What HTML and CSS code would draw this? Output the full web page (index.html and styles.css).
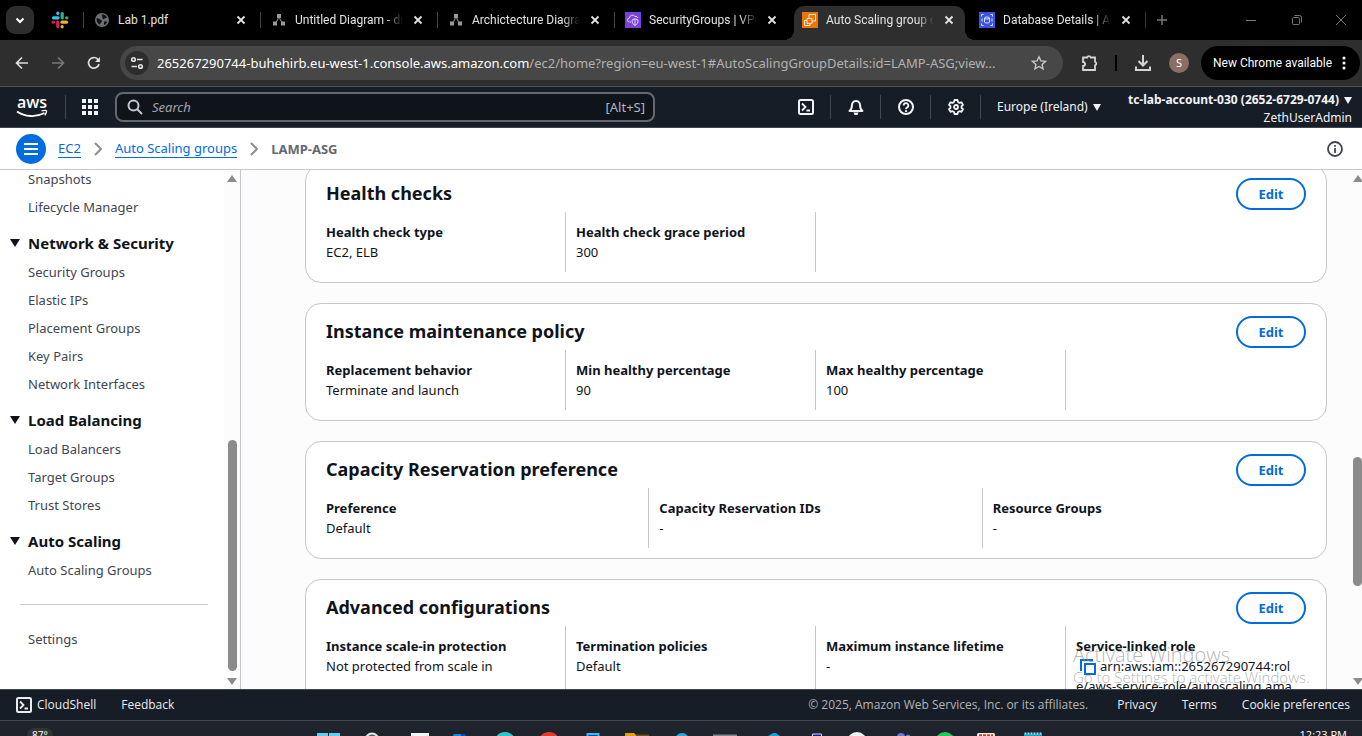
FILE: index.html
```html
<!DOCTYPE html>
<html lang="en">
<head>
<meta charset="utf-8">
<title>Auto Scaling group details</title>
<meta name="viewport" content="width=device-width, initial-scale=1">
<link rel="stylesheet" href="styles.css">
</head>
<body>
<svg class="defs" aria-hidden="true">
  <symbol id="i-close" viewBox="0 0 16 16"><path d="M4.5 4.5l7 7M11.5 4.5l-7 7" stroke="currentColor" stroke-width="1.8" fill="none"/></symbol>
  <symbol id="i-drawio" viewBox="0 0 16 16"><path d="M8 5L4.500 11.500M8 5l3.500 6.500" stroke="#777" stroke-width="1.200"/><rect x="6" y="2" width="4" height="4" fill="#999"/><rect x="2" y="9.500" width="4" height="4" fill="#999"/><rect x="10" y="9.500" width="4" height="4" fill="#999"/></symbol>
  <symbol id="i-shell" viewBox="0 0 16 16"><rect x="1" y="1" width="14" height="14" rx="1.500" fill="none" stroke="currentColor" stroke-width="2"/><path d="M4 4.500L7.500 8 4 11.500M8.500 11.500H12" fill="none" stroke="currentColor" stroke-width="1.800"/></symbol>
  <symbol id="i-chev" viewBox="0 0 16 16"><path d="M5 2l6 6-6 6" fill="none" stroke="#8c8c94" stroke-width="2"/></symbol>
</svg>

<header class="tabstrip">
  <button class="tab-search" aria-label="Search tabs"><svg width="12" height="12" viewBox="0 0 12 12"><path d="M2.500 4.500L6 8l3.500-3.500" fill="none" stroke="#fff" stroke-width="2"/></svg></button>
  <button class="pinned" aria-label="Slack">
    <svg width="18" height="18" viewBox="0 0 18 18" fill="none" stroke-width="3.200" stroke-linecap="round"><path d="M2.500 6.800H7" stroke="#36c5f0"/><path d="M6.800 2.200v.1" stroke="#36c5f0"/><path d="M11.200 2.500V7" stroke="#2eb67d"/><path d="M15.700 6.800h.1" stroke="#2eb67d"/><path d="M11 11.200h4.500" stroke="#ecb22e"/><path d="M11.200 15.700v.1" stroke="#ecb22e"/><path d="M6.800 11v4.500" stroke="#e01e5a"/><path d="M2.200 11.200h.1" stroke="#e01e5a"/></svg>
  </button>
  <div class="tabs">
    <div class="tab"><svg class="fav" viewBox="0 0 16 16"><circle cx="8" cy="8" r="7" fill="#6b6f75"/><path d="M2.500 6.500c2-1 3 1 4.500 1.500s1 2 0 2.500-.5 2-1.500 2C3.500 11.500 2.500 9 2.500 6.500zM8 2.500c2-.5 4.500 1 5 3-1 1-2.500.5-3 1.500s-2-.5-1.500-1.500S7 4 8 2.500zM10.500 9.500c1-.5 2 0 2.500.5-.5 1.500-1.500 2.500-2.500 3-.5-1-1-2.500 0-3.500z" fill="#111"/></svg><a href="#" class="tab-title">Lab 1.pdf</a><button class="tab-close" aria-label="Close"><svg><use href="#i-close"/></svg></button></div>
    <div class="tab"><svg class="fav"><use href="#i-drawio"/></svg><a href="#" class="tab-title fade">Untitled Diagram - draw.io</a><button class="tab-close" aria-label="Close"><svg><use href="#i-close"/></svg></button></div>
    <div class="tab"><svg class="fav"><use href="#i-drawio"/></svg><a href="#" class="tab-title fade">Archictecture Diagram</a><button class="tab-close" aria-label="Close"><svg><use href="#i-close"/></svg></button></div>
    <div class="tab"><svg class="fav" viewBox="0 0 16 16"><rect width="16" height="16" fill="#7a3fe0"/><path d="M6 10H4.500a2 2 0 010-4 3 3 0 015.500-1.500A2.500 2.500 0 0113 6" fill="none" stroke="#e7d8ff"/><path d="M7 8l3-1.300L13 8c0 3-1 4.500-3 5.500C8 12.500 7 11 7 8zM10 7v6" fill="none" stroke="#e7d8ff"/></svg><a href="#" class="tab-title fade">SecurityGroups | VPC Console</a><button class="tab-close" aria-label="Close"><svg><use href="#i-close"/></svg></button></div>
    <div class="tab active"><svg class="fav" viewBox="0 0 16 16"><rect width="16" height="16" fill="#e8760a"/><path d="M7 6V2.500h6.500V9H10" fill="none" stroke="#ffe9d2"/><path d="M5 6.500h5v5H5z" fill="none" stroke="#ffe9d2"/><path d="M5 8.500H2.500v5H8v-2" fill="none" stroke="#ffe9d2"/></svg><a href="#" class="tab-title fade">Auto Scaling group details</a><button class="tab-close" aria-label="Close"><svg><use href="#i-close"/></svg></button></div>
    <div class="tab"><svg class="fav" viewBox="0 0 16 16"><rect width="16" height="16" fill="#3b55e6"/><path d="M2.500 4.500v-2h2M11.500 2.500h2v2M13.500 11.500v2h-2M4.500 13.500h-2v-2" fill="none" stroke="#dbe2ff"/><ellipse cx="8" cy="6" rx="2.500" ry="1" fill="none" stroke="#dbe2ff"/><path d="M5.500 6v4c0 1.400 5 1.400 5 0V6M3 6.500v3M13 6.500v3" fill="none" stroke="#dbe2ff"/></svg><a href="#" class="tab-title fade">Database Details | Aurora</a><button class="tab-close" aria-label="Close"><svg><use href="#i-close"/></svg></button></div>
  </div>
  <button class="new-tab" aria-label="New tab"><svg width="12" height="12" viewBox="0 0 12 12"><path d="M6 1v10M1 6h10" stroke="#777" stroke-width="1.500"/></svg></button>
  <div class="win-controls">
    <button aria-label="Minimize"><svg width="12" height="12" viewBox="0 0 12 12"><path d="M1 6.500h10" stroke="#777"/></svg></button>
    <button aria-label="Restore"><svg width="12" height="12" viewBox="0 0 12 12" fill="none" stroke="#777"><rect x="1.500" y="3.500" width="7" height="7" rx="1"/><path d="M3.500 1.500h5a2 2 0 012 2v5"/></svg></button>
    <button aria-label="Close window"><svg width="12" height="12" viewBox="0 0 12 12"><path d="M1 1l10 10M11 1L1 11" stroke="#777"/></svg></button>
  </div>
</header>

<div class="toolbar">
  <button class="tool" aria-label="Back"><svg width="16" height="16" viewBox="0 0 16 16"><path d="M14 8H3M8 2.500L2.500 8 8 13.500" fill="none" stroke="#ddd" stroke-width="1.700"/></svg></button>
  <button class="tool" aria-label="Forward"><svg width="16" height="16" viewBox="0 0 16 16"><path d="M2 8h11M8 2.500L13.500 8 8 13.500" fill="none" stroke="#777" stroke-width="1.700"/></svg></button>
  <button class="tool" aria-label="Reload"><svg width="16" height="16" viewBox="0 0 16 16"><path d="M13 9a5.300 5.300 0 11-1.300-4.800L13.500 6" fill="none" stroke="#ddd" stroke-width="1.700"/><path d="M14 2v5H9z" fill="#ddd"/></svg></button>
  <div class="omnibox">
    <button class="site-info" aria-label="Site information"><svg width="16" height="16" viewBox="0 0 16 16" fill="none" stroke="#e3e3e3" stroke-width="1.600"><circle cx="4.500" cy="4.500" r="1.800"/><path d="M8 4.500h5.500M2.500 11.500H8"/><circle cx="11.500" cy="11.500" r="1.800"/></svg></button>
    <div class="url"><b>265267290744-buhehirb.eu-west-1.console.aws.amazon.com</b>/ec2/home?region=eu-west-1#AutoScalingGroupDetails:id=LAMP-ASG;view...</div>
    <button class="star" aria-label="Bookmark"><svg width="16" height="16" viewBox="0 0 16 16"><path d="M8 1.800l1.900 4.100 4.500.5-3.300 3 .9 4.400L8 11.500l-4 2.300.9-4.400-3.300-3 4.500-.5z" fill="none" stroke="#c7c7c7" stroke-width="1.400"/></svg></button>
  </div>
  <button class="ext" aria-label="Extensions"><svg width="18" height="18" viewBox="0 0 18 18"><path d="M2 3.500h4.200a1.900 1.900 0 013.600 0H14v4.300a1.900 1.900 0 010 3.600V16H2v-4c2.800 0 2.800-4 0-4z" fill="none" stroke="#d5d5d5" stroke-width="1.800"/></svg></button>
  <span class="tool-sep"></span>
  <button class="download" aria-label="Downloads"><svg width="18" height="18" viewBox="0 0 18 18"><path d="M9 1v10M4.500 7L9 11.500 13.500 7M2 12.500V16h14v-3.500" fill="none" stroke="#d5d5d5" stroke-width="2"/></svg></button>
  <button class="avatar">S</button>
  <button class="update">New Chrome available <svg width="4" height="16" viewBox="0 0 4 16" fill="#fff"><circle cx="2" cy="3" r="1.500"/><circle cx="2" cy="8" r="1.500"/><circle cx="2" cy="13" r="1.500"/></svg></button>
</div>

<nav class="aws-bar">
  <a href="#" class="logo" aria-label="AWS home"><svg width="34" height="26" viewBox="0 0 34 26"><text x="2" y="14" class="logo-text">aws</text><path d="M2 17.500c8 5.500 19 6 27.500 1.500" fill="none" stroke="#fff" stroke-width="1.800"/><path d="M26.500 16.800c3-.8 5.500-.6 5 .5-.2 1.500-.8 3-1.800 4" fill="none" stroke="#fff" stroke-width="1.300"/></svg></a>
  <button class="grid-btn" aria-label="Services"><svg width="16" height="16" viewBox="0 0 16 16" fill="#f3f3f7"><path d="M0 0h4v4H0zM6 0h4v4H6zM12 0h4v4h-4zM0 6h4v4H0zM6 6h4v4H6zM12 6h4v4h-4zM0 12h4v4H0zM6 12h4v4H6zM12 12h4v4h-4z"/></svg></button>
  <label class="search">
    <svg width="16" height="16" viewBox="0 0 16 16"><circle cx="6.500" cy="6.500" r="5" fill="none" stroke="#c6c6cd" stroke-width="2"/><path d="M10 10l5 5" stroke="#c6c6cd" stroke-width="2"/></svg>
    <input type="text" placeholder="Search" aria-label="Search">
    <span>[Alt+S]</span>
  </label>
  <div class="aws-icons">
    <button aria-label="CloudShell"><svg width="16" height="16"><use href="#i-shell"/></svg></button>
    <button aria-label="Notifications"><svg width="16" height="16" viewBox="0 0 16 16"><path d="M1.500 12c2-1.500 2.500-3.500 2.500-6a4 4 0 018 0c0 2.500.5 4.500 2.500 6z" fill="none" stroke="#f3f3f7" stroke-width="2" stroke-linejoin="round"/><path d="M5.500 13.500h5L9.500 16h-3z" fill="#f3f3f7"/></svg></button>
    <button aria-label="Help"><svg width="16" height="16" viewBox="0 0 16 16"><circle cx="8" cy="8" r="7" fill="none" stroke="#f3f3f7" stroke-width="2"/><path d="M5.700 6.500a2.300 2.300 0 113.400 2C8.300 9 8 9.300 8 10.200" fill="none" stroke="#f3f3f7" stroke-width="1.800"/><path d="M7 11.200h2v1.800H7z" fill="#f3f3f7"/></svg></button>
    <button aria-label="Settings"><svg width="16" height="16" viewBox="0 0 16 16" fill="none" stroke="#f3f3f7" stroke-width="1.800" stroke-linejoin="round"><path d="M6.500 1h3l.5 2 1.500.9 2-.6 1.500 2.600L13.500 7.200v1.600L15 10.200l-1.500 2.600-2-.6L10 13l-.5 2h-3L6 13l-1.500-.8-2 .6L1 10.200l1.500-1.400V7.200L1 5.900l1.500-2.600 2 .6L6 3z"/><circle cx="8" cy="8" r="2"/></svg></button>
  </div>
  <button class="region">Europe (Ireland)<i class="caret"></i></button>
  <button class="account"><b>tc-lab-account-030 (2652-6729-0744)<i class="caret"></i></b><span>ZethUserAdmin</span></button>
</nav>

<div class="crumbs">
  <button class="menu" aria-label="Menu"><svg width="14" height="14" viewBox="0 0 14 14"><path d="M0 2h14M0 7h14M0 12h14" stroke="#fff" stroke-width="2"/></svg></button>
  <a href="#">EC2</a><svg width="16" height="16"><use href="#i-chev"/></svg>
  <a href="#">Auto Scaling groups</a><svg width="16" height="16"><use href="#i-chev"/></svg>
  <span>LAMP-ASG</span>
  <button class="info" aria-label="Info"><svg width="16" height="16" viewBox="0 0 16 16"><circle cx="8" cy="8" r="7" fill="none" stroke="#424650" stroke-width="1.800"/><path d="M8 7v5M8 4v1.800" stroke="#424650" stroke-width="1.800"/></svg></button>
</div>

<div class="body">
  <aside class="side">
    <nav class="side-nav">
      <a href="#">Snapshots</a>
      <a href="#">Lifecycle Manager</a>
      <h3><i class="caret"></i>Network &amp; Security</h3>
      <a href="#">Security Groups</a>
      <a href="#">Elastic IPs</a>
      <a href="#">Placement Groups</a>
      <a href="#">Key Pairs</a>
      <a href="#">Network Interfaces</a>
      <h3><i class="caret"></i>Load Balancing</h3>
      <a href="#">Load Balancers</a>
      <a href="#">Target Groups</a>
      <a href="#">Trust Stores</a>
      <h3><i class="caret"></i>Auto Scaling</h3>
      <a href="#">Auto Scaling Groups</a>
      <hr>
      <a href="#">Settings</a>
    </nav>
    <div class="scrollbar"><i class="up"></i><div class="track"><div class="thumb side-thumb"></div></div><i class="down"></i></div>
  </aside>

  <main class="content">
    <div class="cards">
      <section class="card">
        <header><h2>Health checks</h2><button class="edit">Edit</button></header>
        <dl class="cols">
          <div><dt>Health check type</dt><dd>EC2, ELB</dd></div>
          <div><dt>Health check grace period</dt><dd>300</dd></div>
        </dl>
      </section>
      <section class="card">
        <header><h2>Instance maintenance policy</h2><button class="edit">Edit</button></header>
        <dl class="cols">
          <div><dt>Replacement behavior</dt><dd>Terminate and launch</dd></div>
          <div><dt>Min healthy percentage</dt><dd>90</dd></div>
          <div><dt>Max healthy percentage</dt><dd>100</dd></div>
        </dl>
      </section>
      <section class="card">
        <header><h2>Capacity Reservation preference</h2><button class="edit">Edit</button></header>
        <dl class="cols three">
          <div><dt>Preference</dt><dd>Default</dd></div>
          <div><dt>Capacity Reservation IDs</dt><dd>-</dd></div>
          <div><dt>Resource Groups</dt><dd>-</dd></div>
        </dl>
      </section>
      <section class="card">
        <header><h2>Advanced configurations</h2><button class="edit">Edit</button></header>
        <dl class="cols">
          <div><dt>Instance scale-in protection</dt><dd>Not protected from scale in</dd></div>
          <div><dt>Termination policies</dt><dd>Default</dd></div>
          <div><dt>Maximum instance lifetime</dt><dd>-</dd></div>
          <div><dt>Service-linked role</dt><dd class="arn"><button aria-label="Copy"><svg width="16" height="16" viewBox="0 0 16 16" fill="none" stroke="#006ce0" stroke-width="2"><path d="M1 12V1h12"/><rect x="5" y="5" width="10" height="10"/></svg></button>arn:aws:iam::265267290744:rol<br>e/aws-service-role/autoscaling.ama</dd></div>
        </dl>
      </section>
    </div>
    <div class="scrollbar page-bar"><i class="up"></i><div class="track"><div class="thumb page-thumb"></div></div><i class="down"></i></div>
    <div class="watermark"><p>Activate Windows</p><small>Go to Settings to activate Windows.</small></div>
  </main>
</div>

<footer class="aws-footer">
  <a href="#" class="shell"><svg width="16" height="16"><use href="#i-shell"/></svg>CloudShell</a>
  <a href="#">Feedback</a>
  <span class="copy">© 2025, Amazon Web Services, Inc. or its affiliates.</span>
  <a href="#">Privacy</a>
  <a href="#">Terms</a>
  <a href="#">Cookie preferences</a>
</footer>

<div class="taskbar">
  <div class="weather"><span>87°</span></div>
  <div class="apps">
    <svg viewBox="0 0 44 15"><path d="M11 12h11v3H11zM23 12h11v3H23z" fill="#5ccff5"/></svg>
    <svg viewBox="0 0 44 15"><circle cx="22" cy="19" r="6.500" fill="#555" stroke="#e6e6e6" stroke-width="2"/></svg>
    <svg viewBox="0 0 44 15"><path d="M17 12h18v3H17z" fill="#f5f5f5"/></svg>
    <svg viewBox="0 0 44 15"><path d="M15 15c0-2 1-2 3-2h9v2z" fill="#1489df"/><path d="M23 13h3l3 2h-6z" fill="#0b46b5"/></svg>
    <svg viewBox="0 0 44 15"><circle cx="23" cy="22" r="11" fill="#31c4cf"/></svg>
    <svg viewBox="0 0 44 15"><circle cx="23" cy="22" r="11" fill="#e23d31"/></svg>
    <svg viewBox="0 0 44 15"><path d="M17.500 16v-3h11v3" fill="#123e80" stroke="#35baf5" stroke-width="2"/></svg>
    <svg viewBox="0 0 44 15"><path d="M11 15v-3h9l2 2v1z" fill="#dfa008"/><path d="M22 13.500h13V15H22z" fill="#6e5410"/></svg>
    <svg viewBox="0 0 44 15"><circle cx="24" cy="19" r="7" fill="#2ba4df"/></svg>
    <svg viewBox="0 0 44 15"><path d="M11 13.500h24V15H11z" fill="#84878c"/></svg>
    <svg viewBox="0 0 44 15"><path d="M22 15l5-3h3l4 3z" fill="#179de0"/></svg>
    <svg viewBox="0 0 44 15"><path d="M22.500 16v-3h9v3" fill="#1818a8" stroke="#ddd"/></svg>
    <svg viewBox="0 0 44 15"><circle cx="23" cy="21" r="10" fill="#f1f1f1"/></svg>
    <svg viewBox="0 0 44 15"><circle cx="23" cy="16" r="4" fill="#6f76d9"/><circle cx="30" cy="16" r="2.500" fill="#6f76d9"/></svg>
    <svg viewBox="0 0 44 15"><circle cx="23" cy="21" r="10" fill="#23c75d"/></svg>
    <svg viewBox="0 0 44 15"><rect x="11" y="12" width="18" height="6" rx="1.500" fill="#f4efec"/><path d="M13 14.500h14" stroke="#d43b15" stroke-width="2.500" stroke-dasharray="3 1"/></svg>
    <svg viewBox="0 0 44 15"><path d="M14 13h18v2H14z" fill="#1f9bbd"/><path d="M14.500 12.500h17" stroke="#8ce5fa" stroke-width="2" stroke-dasharray="2 1"/></svg>
  </div>
  <div class="clock">12:23 PM</div>
</div>
</body>
</html>
```

FILE: styles.css
```css
* { box-sizing: border-box; }
html, body { height: 100%; }
body {
  margin: 0;
  display: flex;
  flex-direction: column;
  overflow: hidden;
  font: 13px/20px "Noto Sans", "Open Sans", sans-serif;
  color: #0f141a;
  background: #fff;
}
button { font: inherit; color: inherit; background: none; border: 0; padding: 0; display: flex; align-items: center; justify-content: center; flex: none; }
a { color: inherit; text-decoration: none; }
h2, h3, dl, dd, p { margin: 0; }
svg { display: block; flex: none; }
.defs { position: absolute; width: 0; height: 0; }
.caret { display: inline-block; border: 4px solid transparent; border-top: 7px solid currentColor; border-bottom: 0; }

/* Browser tabs */
.tabstrip { flex: none; height: 40px; display: flex; align-items: center; background: #000; color: #e3e3e3; font: 12px/16px Roboto, "Open Sans", sans-serif; }
.tab-search { width: 28px; height: 28px; margin-left: 6px; border-radius: 9px; background: #2d2d2d; }
.pinned { width: 49px; height: 28px; padding-left: 3px; }
.tabs { display: flex; flex: 0 1 1062px; min-width: 0; align-self: stretch; }
.tab { flex: 1 1 0; min-width: 0; display: flex; align-items: center; padding: 0 11px; position: relative; }
.tab::before { content: ""; position: absolute; left: 0; top: 12px; height: 16px; border-left: 1px solid #444; }
.fav { width: 16px; height: 16px; margin-right: 8px; position: relative; }
.tab-title { flex: 1; min-width: 0; overflow: hidden; white-space: nowrap; position: relative; }
.tab-title.fade { mask-image: linear-gradient(to right, #000 84%, transparent); }
.tab-close { width: 16px; height: 16px; margin-left: 7px; color: #e3e3e3; position: relative; }
.tab-close svg { width: 16px; height: 16px; }
.tab.active::before { left: 3px; right: 3px; top: 6px; bottom: 0; height: auto; border: 0; border-radius: 10px 10px 0 0; background: #2e2e2e; }
.tab.active::after { content: ""; position: absolute; left: -7px; right: -7px; bottom: 0; height: 10px; background: radial-gradient(circle at 0 0, transparent 10px, #2e2e2e 10px) left / 10px 10px no-repeat, radial-gradient(circle at 100% 0, transparent 10px, #2e2e2e 10px) right / 10px 10px no-repeat; }
.tab.active + .tab::before { display: none; }
.new-tab { width: 32px; height: 16px; border-left: 1px solid #333; }
.win-controls { margin-left: auto; display: flex; }
.win-controls button { width: 46px; height: 40px; }
.win-controls button:last-child { width: 42px; }

/* Address bar */
.toolbar { flex: none; height: 47px; display: flex; align-items: center; padding: 0 2px 0 4px; background: #2e2e2e; border-bottom: 1px solid #505050; color: #fff; }
.tool { width: 36px; height: 34px; }
.omnibox { flex: 1; min-width: 0; height: 34px; margin-left: 8px; padding: 0 16px 0 5px; border-radius: 17px; background: #474747; display: flex; align-items: center; }
.site-info { width: 24px; height: 24px; border-radius: 12px; background: #2d2d2d; }
.url { flex: 1; min-width: 0; margin-left: 8px; overflow: hidden; white-space: nowrap; font-size: 13px; color: #b2b2b2; }
.url b { font-weight: 400; color: #fff; }
.ext { width: 18px; margin-left: 18px; }
.tool-sep { width: 2px; height: 16px; margin-left: 16px; background: #000; }
.download { width: 18px; margin-left: 17px; }
.avatar { width: 20px; height: 20px; margin-left: 17px; border-radius: 50%; background: #8d6e63; font-size: 11px; }
.update { height: 34px; min-width: 159px; justify-content: space-between; margin-left: 12px; padding: 0 14px 0 12px; gap: 6px; border-radius: 17px; background: #000; font: 12px/16px Roboto, sans-serif; }

/* Console bar */
.aws-bar { flex: none; height: 41px; display: flex; align-items: center; padding-right: 10px; background: #161d26; border-bottom: 1px solid #424650; color: #f3f3f7; }
.logo { padding: 0 16px 0 15px; height: 24px; display: flex; align-items: center; border-right: 1px solid #424650; }
.logo-text { font: 600 16px "Open Sans", sans-serif; fill: #fff; }
.grid-btn { width: 49px; height: 24px; padding-right: 2px; }
.search { flex: 0 1 540px; min-width: 0; height: 30px; padding: 0 8px 0 10px; display: flex; align-items: center; gap: 9px; border: 2px solid #656871; border-radius: 8px; background: #0f141a; color: #b4b4bb; }
.search input { flex: 1; min-width: 0; border: 0; padding: 0; outline: 0; background: none; color: #fff; font: inherit; }
.search input::placeholder { color: #a4a4ad; font-style: italic; opacity: 1; }
.aws-icons { display: flex; margin-left: auto; }
.aws-icons button { width: 50px; height: 24px; border-right: 1px solid #424650; }
.region { width: 142px; justify-content: flex-start; padding-left: 16px; gap: 5px; font-size: 12px; }
.account { width: 229px; padding-top: 3px; flex-direction: column; align-items: flex-end; font-size: 12px; line-height: 18px; white-space: nowrap; }
.account .caret { margin-left: 5px; }
.account b { font-weight: 700; }

/* Breadcrumbs */
.crumbs { flex: none; height: 42px; display: flex; align-items: center; gap: 9px; padding: 0 19px 0 16px; border-bottom: 1px solid #c6c6cd; }
.crumbs a { color: #006ce0; line-height: 18px; border-bottom: 1px solid; }
.crumbs span { color: #656871; font-weight: 700; }
.menu { width: 30px; height: 30px; margin-right: 3px; border-radius: 50%; background: #006ce0; }
.info { margin-left: auto; }

/* Side navigation */
.body { flex: 1; min-height: 0; display: flex; }
.side { flex: none; width: 241px; display: flex; overflow: hidden; border-right: 1px solid #c6c6cd; }
.side-nav { flex: 1; margin-top: -1px; padding-left: 28px; color: #424650; }
.side-nav a { display: block; margin-bottom: 8px; }
.side-nav h3 { display: flex; align-items: center; margin: 14px 0 7px -18px; font-size: 15px; line-height: 24px; color: #0f141a; }
.side-nav h3 .caret { border-width: 8px 5px 0; margin-right: 8px; }
.side-nav hr { margin: 24px 16px 24px -8px; border: 0; border-top: 1px solid #c6c6cd; }
.scrollbar { width: 16px; flex: none; display: flex; flex-direction: column; align-items: center; padding: 5px 0 4px; background: #fcfcfc; }
.track { flex: 1; display: flex; flex-direction: column; }
.thumb { width: 9px; border-radius: 5px; background: #8b8b8b; }
.side-thumb { height: 231px; margin-top: auto; margin-bottom: 7px; }
.page-bar { width: 9px; }
.page-thumb { height: 129px; margin-top: 275px; }
.up, .down { border: 5px solid transparent; }
.up { border-top: 0; border-bottom: 7px solid #8b8b8b; }
.down { border-bottom: 0; border-top: 7px solid #8b8b8b; }

/* Detail cards */
.content { flex: 1; min-width: 0; display: flex; overflow: hidden; position: relative; background: #fcfcfd; }
.cards { flex: 1; min-width: 0; margin: -5px 26px 0 64px; display: flex; flex-direction: column; gap: 20px; }
.card { padding: 12px 20px 10px; border: 1px solid #c6c6cd; border-radius: 16px; background: #fff; }
.card header { display: flex; justify-content: space-between; margin-bottom: 2px; }
.card h2 { font-size: 18px; line-height: 30px; }
.edit { width: 70px; height: 32px; border: 2px solid #006ce0; border-radius: 16px; color: #006ce0; font-weight: 700; }
.cols { display: grid; grid-template-columns: repeat(4, 1fr); margin: 0 -10px; }
.cols.three { grid-template-columns: repeat(3, 1fr); }
.cols > div { min-width: 0; padding: 10px; border-right: 1px solid #c6c6cd; }
.cols > div:nth-child(4), .three > div:last-child { border-right: 0; }
dt { font-weight: 700; }
.arn { white-space: nowrap; }
.arn button { display: inline-block; margin: 0 4px; vertical-align: -4px; }
.watermark { position: absolute; right: 53px; bottom: 2px; width: 236px; color: rgba(140, 140, 140, .65); white-space: nowrap; font-family: "Open Sans", sans-serif; }
.watermark p { font-size: 20px; line-height: 24px; font-weight: 300; }
.watermark small { display: block; font-size: 15px; line-height: 20px; font-weight: 300; }

/* Footer and desktop bar */
.aws-footer { flex: none; height: 32px; display: flex; align-items: center; padding: 0 12px 0 16px; gap: 25px; background: #161d26; border-top: 1px solid #424650; border-bottom: 1px solid #424650; color: #ebebf0; font: 12px/20px "Open Sans", sans-serif; white-space: nowrap; }
.aws-footer .shell { display: flex; align-items: center; gap: 5px; }
.copy { margin-left: auto; color: #b4b4bb; }
.aws-footer .copy + a { margin-left: 4px; }
.taskbar { flex: none; height: 15px; display: flex; overflow: hidden; background: #1f232b; color: #fff; font: 11px/16px "Open Sans", sans-serif; }
.weather { width: 306px; padding: 6px 0 0 27px; }
.weather span { display: inline-block; padding: 0 5px; border-radius: 8px; background: #333; font-size: 10px; line-height: 14px; }
.apps { display: flex; }
.apps svg { width: 44px; height: 15px; }
.clock { margin-left: auto; padding: 6px 15px 0 0; }
```
